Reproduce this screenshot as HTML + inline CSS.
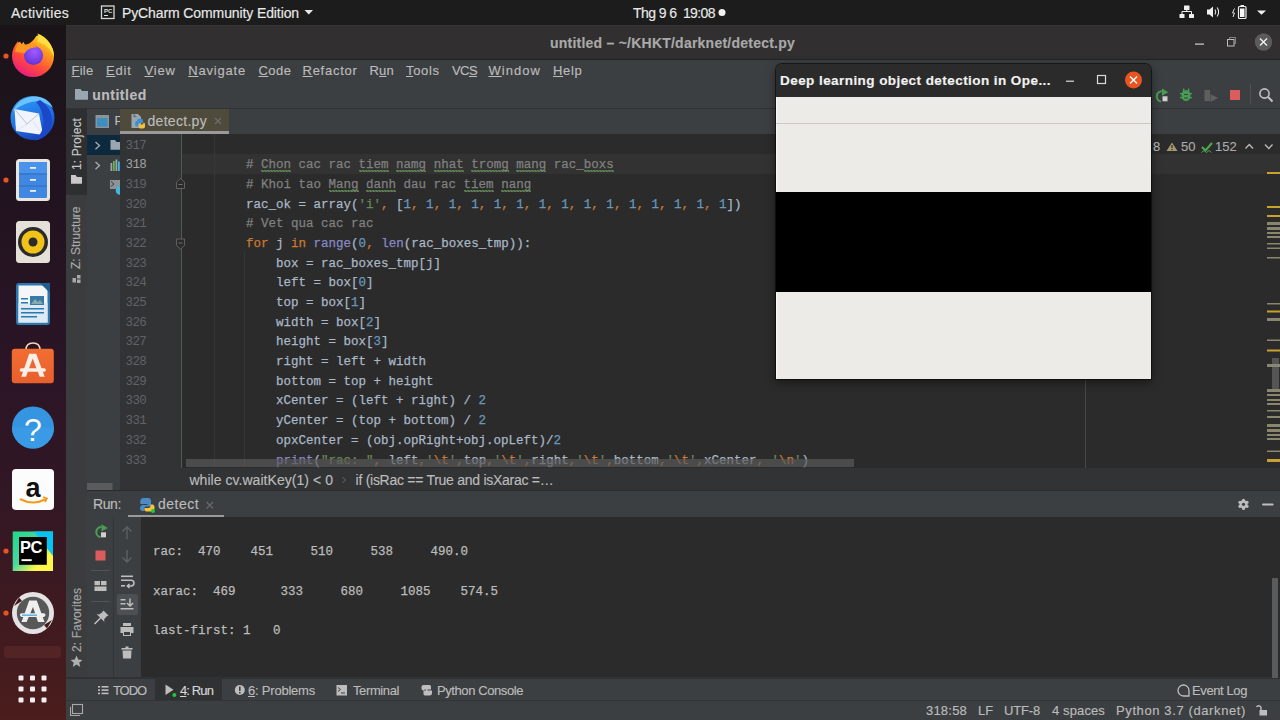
<!DOCTYPE html>
<html><head><meta charset="utf-8">
<style>
*{margin:0;padding:0;box-sizing:border-box}
html,body{width:1280px;height:720px;overflow:hidden;background:#2b2b2b;font-family:"Liberation Sans",sans-serif}
.a{position:absolute}
.t{position:absolute;white-space:pre;-webkit-text-stroke:0.15px}
.t u{text-decoration:underline;text-underline-offset:1px;text-decoration-thickness:1px}
svg{position:absolute;overflow:visible}
#topbar{left:0;top:0;width:1280px;height:25px;background:#1c1c1c}
#dock{left:0;top:25px;width:66px;height:695px;background:linear-gradient(#1a1418 0%,#221320 25%,#2b1526 50%,#321724 68%,#3f1a20 85%,#4b1d1c 100%)}
#titlebar{left:66px;top:25px;width:1214px;height:35px;background:#312f2f;border-top:1px solid #363434;border-bottom:1px solid #222222}
#menubar{left:66px;top:60px;width:1214px;height:49px;background:#3c3f41;border-bottom:1px solid #303234}
#strip{left:66px;top:109px;width:21px;height:570px;background:#3a3c3e}
#stripsel{left:66px;top:109px;width:21px;height:86px;background:#2d2f31}
#projpanel{left:87px;top:109px;width:33px;height:382px;background:#3c3f41}
#projsel{left:87px;top:135px;width:33px;height:20px;background:#0d293e}
#tabbar{left:120px;top:109px;width:1160px;height:25px;background:#3c3f41}
#tab{left:120px;top:109px;width:109px;height:25px;background:#4e4b3d}
#tabline{left:120px;top:131px;width:109px;height:3px;background:#9a9a9a}
#gutter{left:120px;top:134px;width:61px;height:334px;background:#313335}
#editor{left:181px;top:134px;width:1099px;height:334px;background:#2b2b2b}
#curline{left:181px;top:154px;width:1099px;height:20px;background:#323232}
#curgut{left:120px;top:154px;width:61px;height:20px;background:#313335}
#foldline{left:181px;top:134px;width:1px;height:334px;background:#555555}
#crumbs{left:120px;top:468px;width:1160px;height:22px;background:#313335}
#runhdr{left:87px;top:490px;width:1193px;height:27px;background:#3c3f41;border-top:1px solid #2b2b2b}
#runtabline{left:128px;top:515px;width:96px;height:2px;background:#9a9a9a}
#runbody{left:87px;top:517px;width:1193px;height:161px;background:#2b2b2b}
#runtb1{left:87px;top:517px;width:26px;height:161px;background:#3c3f41}
#runtb2{left:113px;top:517px;width:28px;height:161px;background:#3c3f41;border-left:1px solid #323436}
#bottombar{left:66px;top:677px;width:1214px;height:23px;background:#3c3f41;border-top:2px solid #2f3133}
#statusbar{left:66px;top:700px;width:1214px;height:20px;background:#3c3f41;border-top:1px solid #323436}
.code{position:absolute;left:186px;-webkit-text-stroke:0.25px;font-family:"Liberation Mono",monospace;font-size:12.5px;line-height:19.69px;height:19.69px;white-space:pre;color:#a9b7c6}
.ln{position:absolute;left:125.5px;letter-spacing:-0.6px;font-family:"Liberation Mono",monospace;font-size:12.5px;line-height:19.69px;white-space:pre;color:#606366}
.c{color:#808080}.k{color:#cc7832}.n{color:#6897bb}.s{color:#6a8759}.b{color:#8888c6}
.ty{background-image:linear-gradient(45deg,transparent 30%,#5b8250 30%,#5b8250 62%,transparent 62%),linear-gradient(135deg,transparent 30%,#5b8250 30%,#5b8250 62%,transparent 62%);background-size:3px 2px,3px 2px;background-position:0 100%,1.5px 100%;background-repeat:repeat-x}
.con{position:absolute;left:153px;-webkit-text-stroke:0.25px;font-family:"Liberation Mono",monospace;font-size:12.5px;line-height:19.69px;white-space:pre;color:#bbbbbb}
#dialog{left:776px;top:97px;width:375px;height:282px;background:#edebe7;border-left:1px solid #f8f8f6}
#dshadow{left:776px;top:64px;width:375px;height:315px;box-shadow:0 0 0 1px rgba(10,10,10,0.7),0 3px 10px rgba(0,0,0,0.5);border-radius:6px 6px 0 0}
#dtitle{left:776px;top:64px;width:375px;height:33px;background:#2c2b2b;border-radius:6px 6px 0 0}
#dline{left:776px;top:123px;width:375px;height:1px;background:#cdc9c4}
#dblack{left:776px;top:192px;width:375px;height:100px;background:#000}
</style></head><body>
<div id="topbar" class="a"></div>
<div id="dock" class="a"></div>
<div id="titlebar" class="a"></div>
<div id="menubar" class="a"></div>
<div id="strip" class="a"></div>
<div id="stripsel" class="a"></div>
<div id="projpanel" class="a"></div>
<div id="projsel" class="a"></div>
<div id="tabbar" class="a"></div>
<div class="t" style="left:114.4px;top:112px;font-size:13px;line-height:18px;color:#bbbbbb">P</div>
<div id="tab" class="a"></div>
<div id="tabline" class="a"></div>
<div id="gutter" class="a"></div>
<div id="editor" class="a"></div>
<div id="curline" class="a"></div>
<div id="foldline" class="a"></div>
<div id="crumbs" class="a"></div>
<div id="runhdr" class="a"></div>
<div id="runtabline" class="a"></div>
<div id="runbody" class="a"></div>
<div id="runtb1" class="a"></div>
<div id="runtb2" class="a"></div>
<div id="bottombar" class="a"></div>
<div id="statusbar" class="a"></div>
<div class="a" style="left:155px;top:679px;width:67px;height:21px;background:#2f3133"></div>
<div class='ln' style='top:136.50px;color:#606366'>317</div>
<div class='code' style='top:156.19px'>        <span class='c'># </span><span class='c ty'>Chon</span> <span class='c'>cac rac </span><span class='c ty'>tiem</span> <span class='c'></span><span class='c ty'>namg</span> <span class='c'></span><span class='c ty'>nhat</span> <span class='c'></span><span class='c ty'>tromg</span> <span class='c'></span><span class='c ty'>mang</span> <span class='c'>rac_</span><span class='c ty'>boxs</span></div>
<div class='ln' style='top:156.19px;color:#a4a3a3'>318</div>
<div class='code' style='top:175.88px'>        <span class='c'># Khoi tao </span><span class='c ty'>Mang</span> <span class='c'></span><span class='c ty'>danh</span> <span class='c'>dau rac </span><span class='c ty'>tiem</span> <span class='c'></span><span class='c ty'>nang</span></div>
<div class='ln' style='top:175.88px;color:#606366'>319</div>
<div class='code' style='top:195.57px'>        rac_ok = array(<span class='s'>'i'</span><span class='k'>, </span>[<span class='n'>1</span><span class='k'>, </span><span class='n'>1</span><span class='k'>, </span><span class='n'>1</span><span class='k'>, </span><span class='n'>1</span><span class='k'>, </span><span class='n'>1</span><span class='k'>, </span><span class='n'>1</span><span class='k'>, </span><span class='n'>1</span><span class='k'>, </span><span class='n'>1</span><span class='k'>, </span><span class='n'>1</span><span class='k'>, </span><span class='n'>1</span><span class='k'>, </span><span class='n'>1</span><span class='k'>, </span><span class='n'>1</span><span class='k'>, </span><span class='n'>1</span><span class='k'>, </span><span class='n'>1</span><span class='k'>, </span><span class='n'>1</span>])</div>
<div class='ln' style='top:195.57px;color:#606366'>320</div>
<div class='code' style='top:215.26px'>        <span class='c'># Vet qua cac rac</span></div>
<div class='ln' style='top:215.26px;color:#606366'>321</div>
<div class='code' style='top:234.95px'>        <span class='k'>for</span> j <span class='k'>in</span> <span class='b'>range</span>(<span class='n'>0</span><span class='k'>, </span><span class='b'>len</span>(rac_boxes_tmp)):</div>
<div class='ln' style='top:234.95px;color:#606366'>322</div>
<div class='code' style='top:254.64px'>            box = rac_boxes_tmp[j]</div>
<div class='ln' style='top:254.64px;color:#606366'>323</div>
<div class='code' style='top:274.33px'>            left = box[<span class='n'>0</span>]</div>
<div class='ln' style='top:274.33px;color:#606366'>324</div>
<div class='code' style='top:294.02px'>            top = box[<span class='n'>1</span>]</div>
<div class='ln' style='top:294.02px;color:#606366'>325</div>
<div class='code' style='top:313.71px'>            width = box[<span class='n'>2</span>]</div>
<div class='ln' style='top:313.71px;color:#606366'>326</div>
<div class='code' style='top:333.40px'>            height = box[<span class='n'>3</span>]</div>
<div class='ln' style='top:333.40px;color:#606366'>327</div>
<div class='code' style='top:353.09px'>            right = left + width</div>
<div class='ln' style='top:353.09px;color:#606366'>328</div>
<div class='code' style='top:372.78px'>            bottom = top + height</div>
<div class='ln' style='top:372.78px;color:#606366'>329</div>
<div class='code' style='top:392.47px'>            xCenter = (left + right) / <span class='n'>2</span></div>
<div class='ln' style='top:392.47px;color:#606366'>330</div>
<div class='code' style='top:412.16px'>            yCenter = (top + bottom) / <span class='n'>2</span></div>
<div class='ln' style='top:412.16px;color:#606366'>331</div>
<div class='code' style='top:431.85px'>            opxCenter = (obj.opRight+obj.opLeft)/<span class='n'>2</span></div>
<div class='ln' style='top:431.85px;color:#606366'>332</div>
<div class='code' style='top:451.54px'>            <span class='b'>print</span>(<span class='s'>"rac: "</span><span class='k'>, </span>left<span class='k'>,</span><span class='s'>'</span><span class='k'>\t</span><span class='s'>'</span><span class='k'>,</span>top<span class='k'>,</span><span class='s'>'</span><span class='k'>\t</span><span class='s'>'</span><span class='k'>,</span>right<span class='k'>,</span><span class='s'>'</span><span class='k'>\t</span><span class='s'>'</span><span class='k'>,</span>bottom<span class='k'>,</span><span class='s'>'</span><span class='k'>\t</span><span class='s'>'</span><span class='k'>,</span>xCenter<span class='k'>, </span><span class='s'>'</span><span class='k'>\n</span><span class='s'>'</span>)</div>
<div class='ln' style='top:451.54px;color:#606366'>333</div>
<div class='con' style='top:543px'>rac:  470    451     510     538     490.0</div>
<div class='con' style='top:582.5px'>xarac:  469      333     680     1085    574.5</div>
<div class='con' style='top:622px'>last-first: 1   0</div>


<svg style="left:0;top:24px" width="66" height="696" viewBox="0 24 66 696">
 <defs>
  <radialGradient id="ffg" cx="0.45" cy="0.7" r="0.65">
   <stop offset="0" stop-color="#ff9a1f"/><stop offset="0.55" stop-color="#ff5a2a"/><stop offset="0.85" stop-color="#ff3366"/><stop offset="1" stop-color="#e31587"/>
  </radialGradient>
  <radialGradient id="ffp" cx="0.5" cy="0.6" r="0.6">
   <stop offset="0" stop-color="#6b5cff"/><stop offset="1" stop-color="#9a3cf0"/>
  </radialGradient>
  <linearGradient id="tbg" x1="0" y1="0" x2="1" y2="1"><stop offset="0" stop-color="#2a8cf0"/><stop offset="1" stop-color="#1b4fc0"/></linearGradient>
  <linearGradient id="pcg" x1="0" y1="1" x2="1" y2="0"><stop offset="0" stop-color="#21d789"/><stop offset="0.5" stop-color="#fcf84a"/><stop offset="1" stop-color="#07c3f2"/></linearGradient>
 </defs>
 <!-- firefox -->
 <circle cx="6" cy="56" r="2.6" fill="#e95420"/>
 <linearGradient id="ffr" x1="0.85" y1="0.05" x2="0.25" y2="1"><stop offset="0" stop-color="#ffe23a"/><stop offset="0.3" stop-color="#ff9a1a"/><stop offset="0.65" stop-color="#ff4a3c"/><stop offset="1" stop-color="#e8168a"/></linearGradient>
 <radialGradient id="ffp2" cx="0.55" cy="0.3" r="0.8"><stop offset="0" stop-color="#a05cff"/><stop offset="1" stop-color="#5b2bd0"/></radialGradient>
 <circle cx="33" cy="56" r="21" fill="url(#ffr)"/>
 <path d="M18 33 L38 33 C35 39 31 43 27 44.5 C24 44.5 21 44 18 42 Z" fill="#1b1519"/>
 <path d="M37.5 33.5 C47 37 54 46 54 57 C51 49 45 43 37 42 C39 39 38.5 36 37.5 33.5Z" fill="#ffe040"/>
 <circle cx="33.5" cy="55.5" r="9.6" fill="url(#ffp2)"/>
 <path d="M15 52 C16 47 18 43 20 41.5 L21.5 44.5 L23.5 41.8 L25 45 C29 44 34 45 37 47.5 C32 47 27 49 24.5 53.5 C22 52.5 18 52 15 52Z" fill="#ff9820"/>
 <!-- thunderbird -->
 <linearGradient id="tbg2" x1="0.3" y1="0" x2="0.7" y2="1"><stop offset="0" stop-color="#2e9bf5"/><stop offset="0.6" stop-color="#1d6ae0"/><stop offset="1" stop-color="#1a3fb0"/></linearGradient>
 <circle cx="32.5" cy="118" r="22" fill="url(#tbg2)"/>
 <path d="M13 112 C16 101 26 96 36 96.5 C44 97 50 101 53 108 C46 102 36 100 28 103 C22 105 16 108 13 112Z" fill="#6cc2ff"/>
 <path d="M14.5 109 L39 113.5 L43 135 L16 131 Z" fill="#f2f4fb"/>
 <path d="M14.5 109 L27 124 L39 113.5" fill="none" stroke="#b6bdd6" stroke-width="0.9"/>
 <path d="M16 131 L27 124 M43 135 L33 121" fill="none" stroke="#d0d5e6" stroke-width="0.6"/>
 <path d="M40 100 C50 106 55 118 50 130 C46 137 40 140 34 140.5 C42 134 45 126 43 118 C42 111 40 106 36 102Z" fill="#1a48c8"/>
 <!-- files -->
 <circle cx="6" cy="180" r="2.6" fill="#e95420"/>
 <rect x="16" y="159" width="34" height="42" rx="3.5" fill="#e9e6e2"/>
 <rect x="19" y="162" width="28" height="36" rx="1.5" fill="#3f87e0"/>
 <rect x="19" y="162" width="28" height="11" fill="#4a92ea"/>
 <line x1="19" y1="174" x2="47" y2="174" stroke="#2c68b8" stroke-width="0.8"/>
 <line x1="19" y1="186" x2="47" y2="186" stroke="#2c68b8" stroke-width="0.8"/>
 <rect x="30" y="167" width="6" height="1.8" fill="#f0f0f0"/>
 <rect x="30" y="179" width="6" height="1.8" fill="#f0f0f0"/>
 <rect x="30" y="190" width="6" height="1.8" fill="#f0f0f0"/>
 <!-- rhythmbox -->
 <rect x="16" y="221" width="34" height="42" rx="3.5" fill="#e6e1d8"/>
 <circle cx="33" cy="242" r="15" fill="#2b2b2b"/>
 <circle cx="33" cy="242" r="11.5" fill="#f1c318"/>
 <circle cx="33" cy="242" r="4.5" fill="#2b2b2b"/>
 <!-- writer -->
 <path d="M16 286 Q16 283 19 283 L44 283 L50 289 L50 322 Q50 325 47 325 L19 325 Q16 325 16 322Z" fill="#2a78b0"/>
 <path d="M18.5 285.5 L43 285.5 L47.5 290 L47.5 322.5 L18.5 322.5Z" fill="#f4f6f8"/>
 <path d="M18.5 303 L47.5 303 L47.5 322.5 L18.5 322.5Z" fill="#ddeaf2"/>
 <path d="M40 283 L50 283 L50 293 Z" fill="#1e5f8f"/>
 <rect x="21" y="298" width="7" height="1.5" fill="#2a78b0"/><rect x="21" y="302" width="7" height="1.5" fill="#2a78b0"/>
 <rect x="30" y="296" width="14" height="9" fill="#3a7aa8"/><path d="M31 304 L35 299 L38 302 L40 300 L43 304Z" fill="#8aa"/>
 <rect x="21" y="308" width="23" height="1.5" fill="#2a78b0"/><rect x="21" y="312" width="23" height="1.5" fill="#2a78b0"/><rect x="21" y="316" width="16" height="1.5" fill="#2a78b0"/>
 <!-- software -->
 <path d="M26 350 Q26 343 33 343 Q40 343 40 350" fill="none" stroke="#f6d2bd" stroke-width="1.6"/>
 <linearGradient id="swg" x1="0" y1="0" x2="0" y2="1"><stop offset="0" stop-color="#f26d32"/><stop offset="1" stop-color="#e8602c"/></linearGradient>
 <rect x="11.8" y="348.8" width="42" height="34.5" rx="3" fill="url(#swg)"/>
 <path d="M29.2 353.8 L36.2 353.8 L44.7 376.7 L39.7 376.7 L32.7 358.5 L26 376.7 L21.3 376.7 Z" fill="#fbefe8"/>
 <rect x="19.7" y="368.2" width="26.2" height="3.6" rx="1.8" fill="#fbefe8"/>
 <!-- help -->
 <circle cx="33" cy="427.5" r="21" fill="#3595e0"/>
 <path d="M12 427.5 A21 21 0 0 0 54 427.5Z" fill="#3a9ae6"/>
 <text x="33" y="441" text-anchor="middle" font-family="Liberation Sans" font-size="32" fill="#ffffff">?</text>
 <!-- amazon -->
 <rect x="12" y="469" width="42" height="41" rx="4" fill="#fcfcfc"/>
 <text x="33" y="497" text-anchor="middle" font-family="Liberation Sans" font-weight="bold" font-size="27" fill="#111111">a</text>
 <path d="M20 499 Q33 506 46 499" fill="none" stroke="#f39b1b" stroke-width="2"/>
 <path d="M43 497 L47 498.5 L45 502" fill="none" stroke="#f39b1b" stroke-width="1.6"/>
 <!-- pycharm -->
 <circle cx="6" cy="551" r="2.6" fill="#e95420"/>
 <linearGradient id="pcg2" x1="0" y1="0" x2="1" y2="1"><stop offset="0" stop-color="#21d789"/><stop offset="0.45" stop-color="#4cd6a0"/><stop offset="0.75" stop-color="#fcf84a"/><stop offset="1" stop-color="#fcf84a"/></linearGradient>
 <rect x="12.7" y="531.5" width="40.3" height="39.5" fill="url(#pcg2)"/>
 <path d="M34 531.5 L53 531.5 L53 556 Z" fill="#07c3f2"/>
 <rect x="19" y="537" width="27.8" height="27.8" fill="#000"/>
 <text x="20" y="553.2" font-family="Liberation Sans" font-weight="bold" font-size="16.5" fill="#fff" letter-spacing="-0.6">PC</text>
 <rect x="21.5" y="559.2" width="10.2" height="1.9" fill="#fff"/>
 <!-- updater -->
 <circle cx="6" cy="613" r="2.6" fill="#e95420"/>
 <circle cx="33" cy="613" r="21" fill="#e4e2e2"/>
 <circle cx="33" cy="613" r="16.2" fill="#585858"/>
 <path d="M14 606 L19 597.5 L22 601 Z" fill="#451a1d"/>
 <path d="M52 620 L47 628.5 L44 625 Z" fill="#451a1d"/>
 <path d="M29.2 600.5 L36.8 600.5 L44.5 622 L38 622 L33 607 L26.6 622 L21.5 622 Z" fill="#efefef"/>
 <rect x="19.9" y="613.3" width="25.6" height="3.6" rx="1.8" fill="#efefef"/>
 <rect x="22" y="614.5" width="15" height="1.3" fill="#4aa8e0"/>
 <!-- separator -->
 <rect x="4" y="646" width="57" height="12" rx="3" fill="#5a2828" opacity="0.7"/>
 <!-- grid -->
 <g fill="#f4f0f0">
  <rect x="18.5" y="675.5" width="5" height="5" rx="1"/><rect x="30" y="675.5" width="5" height="5" rx="1"/><rect x="41.5" y="675.5" width="5" height="5" rx="1"/>
  <rect x="18.5" y="686.5" width="5" height="5" rx="1"/><rect x="30" y="686.5" width="5" height="5" rx="1"/><rect x="41.5" y="686.5" width="5" height="5" rx="1"/>
  <rect x="18.5" y="697.5" width="5" height="5" rx="1"/><rect x="30" y="697.5" width="5" height="5" rx="1"/><rect x="41.5" y="697.5" width="5" height="5" rx="1"/>
 </g>
</svg>

<svg style="left:0;top:0" width="1280" height="60" viewBox="0 0 1280 60">
 <!-- pycharm small icon -->
 <rect x="101.5" y="6" width="12.5" height="12.5" fill="#1a1a1a" stroke="#d8d8d8" stroke-width="1.3"/>
 <text x="104" y="13" font-family="Liberation Sans" font-weight="bold" font-size="6" fill="#e0e0e0">PC</text>
 <rect x="104" y="15" width="4" height="1" fill="#e0e0e0"/>
 <!-- caret -->
 <path d="M304.5 10 L313 10 L308.75 14.5Z" fill="#e8e8e8"/>
 <!-- clock dot -->
 <circle cx="722" cy="12.5" r="3.5" fill="#f0f0f0"/>
 <!-- network -->
 <g fill="#f0f0f0"><rect x="1184" y="5.5" width="5.5" height="4.5" rx="0.5"/><rect x="1179.5" y="14" width="5" height="4" rx="0.5"/><rect x="1189" y="14" width="5" height="4" rx="0.5"/></g>
 <path d="M1186.75 10 V12 M1182 14 V11.5 H1191.5 V14" fill="none" stroke="#f0f0f0" stroke-width="1"/>
 <!-- volume -->
 <path d="M1207 9.5 H1209.5 L1213 6.5 V17.5 L1209.5 14.5 H1207Z" fill="#f0f0f0"/>
 <path d="M1215 9.5 Q1216.5 12 1215 14.5 M1217.2 7.5 Q1220 12 1217.2 16.5" fill="none" stroke="#e8e8e8" stroke-width="1.1"/>
 <!-- battery -->
 <path d="M1234.5 8.5 L1232.5 13 L1234.5 13 L1233 17" fill="none" stroke="#e0e0e0" stroke-width="1"/>
 <rect x="1238.5" y="6.5" width="7.5" height="12" rx="1" fill="none" stroke="#f0f0f0" stroke-width="1.2"/>
 <rect x="1240.5" y="5" width="3.5" height="1.5" fill="#f0f0f0"/>
 <rect x="1240" y="8.5" width="4.5" height="8.5" fill="#f8f8f8"/>
 <!-- dropdown -->
 <path d="M1257 10.5 L1266 10.5 L1261.5 14.8Z" fill="#f0f0f0"/>
 <!-- window controls -->
 <rect x="1195" y="43.5" width="9" height="1.2" fill="#cfcfcf"/>
 <rect x="1227.5" y="39.5" width="6.5" height="6.5" fill="none" stroke="#bdbdbd" stroke-width="1"/>
 <path d="M1229.5 39.5 V37.5 H1235.5 V43.5 H1234" fill="none" stroke="#9a9a9a" stroke-width="0.8"/>
 <circle cx="1263.5" cy="42" r="8.7" fill="#5c5b5b"/>
 <path d="M1260 38.5 L1267 45.5 M1267 38.5 L1260 45.5" stroke="#f4f4f4" stroke-width="1.3"/>
</svg>

<svg style="left:0;top:0" width="1280" height="720" viewBox="0 0 1280 720">
 <!-- nav folder -->
 <path d="M75 89 H80.5 L82 91 H88 V99.7 H75Z" fill="#9aa7b0"/>
 <!-- project strip: folder icon -->
 <path d="M71 175 H75.5 L77 177 H82 V183.8 H71Z" fill="#c8c8c8"/>
 <!-- structure icon -->
 <g fill="#a8a8a8"><rect x="72.5" y="278" width="3.5" height="4.5"/><rect x="77" y="275" width="3.5" height="3.5"/><rect x="77" y="279.5" width="3.5" height="3.5"/></g>
 <!-- favorites star -->
 <path d="M76.5 655.5 L78.2 659.6 L82.5 659.9 L79.2 662.7 L80.3 667 L76.5 664.6 L72.7 667 L73.8 662.7 L70.5 659.9 L74.8 659.6Z" fill="#b0b0b0"/>
 <!-- project panel icon -->
 <rect x="95.5" y="115" width="13.5" height="13" fill="#8c9399"/>
 <rect x="97" y="118" width="10.5" height="8.7" fill="#3e8ebf"/>
 <!-- chevrons -->
 <path d="M95.5 142 L99.5 145.6 L95.5 149.2" fill="none" stroke="#a8adb2" stroke-width="1.3"/>
 <path d="M95.5 162 L99.5 165.6 L95.5 169.2" fill="none" stroke="#a8adb2" stroke-width="1.3"/>
 <!-- folder row1 -->
 <path d="M110.5 140 H115 L116.5 142 H120 V149.8 H110.5Z" fill="#9aa7b0"/>
 <!-- bars icon row2 -->
 <rect x="110.5" y="163" width="1.8" height="8" fill="#9aa7b0"/><rect x="113" y="161" width="1.8" height="10" fill="#62b543"/><rect x="115.5" y="159.5" width="1.8" height="11.5" fill="#9aa7b0"/><rect x="118" y="161.5" width="1.8" height="9.5" fill="#40b6e0"/>
 <!-- row3 icon -->
 <rect x="110" y="180" width="10" height="9" fill="#8c9399"/>
 <path d="M111 181.5 L114 184 L111 186.5" fill="none" stroke="#3c3f41" stroke-width="1"/>
 <path d="M120 186.2 A4.3 4.3 0 0 0 120 194.8Z" fill="#40b6e0"/>
 <!-- project h-scroll thumb -->
 <rect x="87" y="483" width="25.5" height="7" fill="#595b5d"/>
 <!-- tab python file icon -->
 <path d="M131.5 114 H138 L141 117 V128 H131.5Z" fill="#9aa7b0"/>
 <path d="M133.5 113.5 L137 117.3 L133.5 117.3Z" fill="#3c3f41" opacity="0.5"/>
 <path d="M137 120.5 Q137 118.8 139 118.8 L141.5 118.8 Q143 118.8 143 120.3 L143 123 L139.5 123 Q138 123 138 124.5 L138 126.5 L136.8 126.5 Q135.2 126.5 135.2 124.5 L135.2 122.5 Q135.2 121 137 121Z" fill="#3d8fd1"/>
 <path d="M143.5 122.5 Q145 122.5 145 124.5 L145 126.5 Q145 128.5 143 128.5 L140.5 128.5 Q139 128.5 139 127 L139 124.5 L142 124.5 Q143.5 124.5 143.5 122.5Z" fill="#f5c33b"/>
 <!-- tab close -->
 <path d="M215 118 L221 124 M221 118 L215 124" stroke="#6e6e6e" stroke-width="1.1"/>
 <!-- fold markers -->
 <path d="M176.5 188.5 V182 L180.5 178.5 L184.5 182 V188.5Z" fill="#2b2b2b" stroke="#606060" stroke-width="1"/>
 <rect x="178.5" y="184" width="4" height="1" fill="#707070"/>
 <path d="M176.5 239 V245.5 L180.5 249 L184.5 245.5 V239Z" fill="#2b2b2b" stroke="#606060" stroke-width="1"/>
 <rect x="178.5" y="242.5" width="4" height="1" fill="#707070"/>
 <!-- indent guides -->
 <rect x="214" y="134" width="1" height="334" fill="#363636"/>
 <rect x="244" y="252" width="1" height="216" fill="#363636"/>
 <!-- right margin -->
 <rect x="1085" y="134" width="1" height="334" fill="#474747"/>
 <!-- inspection widget -->
 <path d="M1172 142.5 L1177.5 151 H1166.5Z" fill="#a39a6e"/>
 <rect x="1171.4" y="145" width="1.2" height="3" fill="#2b2b2b"/><rect x="1171.4" y="149" width="1.2" height="1.1" fill="#2b2b2b"/>
 <path d="M1202 147 L1205.5 150.5 L1212 143" fill="none" stroke="#4da652" stroke-width="2.2"/>
 <path d="M1201.5 152.5 L1204 150.5 L1206.5 152.5 L1209 150.5 L1211.5 152.5" fill="none" stroke="#4da652" stroke-width="1"/>
 <path d="M1245.5 148.5 L1249.3 144.5 L1253 148.5" fill="none" stroke="#bababa" stroke-width="1.3"/>
 <path d="M1265 144.5 L1268.8 148.5 L1272.5 144.5" fill="none" stroke="#bababa" stroke-width="1.3"/>
 <!-- error stripes -->
 <g fill="#c9a22e">
  <rect x="1267" y="172" width="13" height="2"/><rect x="1267" y="206" width="13" height="2"/><rect x="1267" y="215" width="13" height="2"/>
  <rect x="1267" y="310.5" width="13" height="2"/><rect x="1267" y="349.5" width="13" height="2"/><rect x="1267" y="459" width="13" height="3"/>
 </g>
 <g fill="#8a866e">
  <rect x="1267" y="222" width="13" height="3"/><rect x="1267" y="227" width="13" height="3"/><rect x="1267" y="232" width="13" height="2"/><rect x="1267" y="236" width="13" height="2"/>
  <rect x="1267" y="243" width="13" height="1.5"/><rect x="1267" y="247.5" width="13" height="1.5"/><rect x="1267" y="257" width="13" height="1.5"/>
  <rect x="1267" y="303" width="13" height="1.5"/><rect x="1267" y="318" width="13" height="3"/><rect x="1267" y="339.5" width="13" height="1.5"/>
  <rect x="1267" y="364" width="13" height="3"/><rect x="1267" y="389" width="13" height="3"/><rect x="1267" y="394" width="13" height="2"/><rect x="1267" y="399" width="13" height="2"/><rect x="1267" y="403" width="13" height="2"/>
  <rect x="1267" y="410" width="13" height="1.5"/><rect x="1267" y="416" width="13" height="2"/><rect x="1267" y="424" width="13" height="3"/><rect x="1267" y="429" width="13" height="3"/><rect x="1267" y="434" width="13" height="2"/><rect x="1267" y="438" width="13" height="2"/><rect x="1267" y="450.5" width="13" height="1.5"/>
 </g>
 <rect x="1272" y="358" width="7" height="31" fill="#8a8a8a" opacity="0.45"/>
 <!-- editor h scrollbar -->
 <rect x="186" y="459" width="668" height="8" fill="#5a5a5a" opacity="0.7"/>
 <path d="M342.5 477 L345.5 480 L342.5 483" fill="none" stroke="#6a6a6a" stroke-width="1"/>
 <!-- nav toolbar icons -->
 <path d="M1161 101.5 A5.2 5.2 0 0 1 1162 91.2" fill="none" stroke="#499c54" stroke-width="2.1"/>
 <path d="M1162 88.6 L1168.3 92.2 L1162 95.8Z" fill="#499c54"/>
 <rect x="1162.5" y="96.3" width="5" height="5" fill="#d0d0d0"/>
 <g fill="#499c54"><ellipse cx="1186" cy="95.5" rx="4.5" ry="5.5"/><rect x="1180" y="93" width="12" height="1.3"/><rect x="1180" y="97" width="12" height="1.3"/><rect x="1183" y="88.5" width="1.3" height="3"/><rect x="1188" y="88.5" width="1.3" height="3"/></g>
 <rect x="1184" y="94" width="4" height="1" fill="#3c3f41"/><rect x="1184" y="97.5" width="4" height="1" fill="#3c3f41"/>
 <path d="M1204.5 90 H1210 V101 H1204.5Z M1210.5 94 L1218 98 L1210.5 102Z" fill="#5e6060"/>
 <rect x="1230" y="90" width="10" height="10" fill="#db5c5c"/>
 <rect x="1250" y="84" width="1" height="20" fill="#515151"/>
 <circle cx="1264.5" cy="93.5" r="4.6" fill="none" stroke="#c0c0c0" stroke-width="1.6"/>
 <path d="M1268 97 L1272.5 101.5" stroke="#c0c0c0" stroke-width="2"/>
 <!-- run header -->
 <path d="M143.5 498 Q140.3 498 140.3 501.5 L140.3 504 L147.5 504 L147.5 505 L143 505 Q140 505 140 508.5 Q140 511 143 511 L144.5 511 L144.5 508 Q144.5 506.5 146 506.5 L149.5 506.5 Q151 506.5 151 505 L151 501 Q151 498 148 498Z" fill="#4c8cc6"/>
 <path d="M150.5 504.5 L152.5 504.5 Q154.5 504.5 154.5 508 Q154.5 511.5 151.5 511.5 L146.5 511.5 Q144.5 511.5 144.5 509.5 L144.5 508 L148.5 508 Q150.5 508 150.5 506Z" fill="#f2c53d"/>
 <circle cx="153" cy="511" r="2" fill="#1ccc34"/>
 <path d="M206.5 502 L213 508.5 M213 502 L206.5 508.5" stroke="#6a6a6a" stroke-width="1.1"/>
 <!-- gear -->
 <g transform="translate(1243.5,504.3)" fill="#bdbdbd">
  <circle r="4"/><circle cx="0.00" cy="4.10" r="1.55"/><circle cx="-3.55" cy="2.05" r="1.55"/><circle cx="-3.55" cy="-2.05" r="1.55"/><circle cx="-0.00" cy="-4.10" r="1.55"/><circle cx="3.55" cy="-2.05" r="1.55"/><circle cx="3.55" cy="2.05" r="1.55"/>
  <circle r="1.6" fill="#3c3f41"/>
 </g>
 <rect x="1262" y="503.4" width="11.6" height="2" rx="1" fill="#bdbdbd"/>
 <!-- run toolbar col1 -->
 <path d="M100.5 537.2 A5.2 5.2 0 0 1 101.5 526.9" fill="none" stroke="#499c54" stroke-width="2.1"/>
 <path d="M101.5 524.3 L107.8 527.9 L101.5 531.5Z" fill="#499c54"/>
 <rect x="101" y="532.3" width="5" height="5" fill="#d0d0d0"/>
 <rect x="95.5" y="550.5" width="10" height="10" fill="#db5c5c"/>
 <rect x="91" y="570" width="19" height="1" fill="#515355"/>
 <g fill="#bdbdbd"><rect x="94.5" y="581" width="5.5" height="4.2"/><rect x="101" y="581" width="5.5" height="4.2"/><rect x="94.5" y="586.5" width="12" height="4.5"/></g>
 <rect x="91" y="601" width="19" height="1" fill="#515355"/>
 <path d="M103.5 610.5 L108.5 615.5 L106.5 616.5 L104 619.5 L104.5 622 L96.5 614 L99 614.5 L102 612.5 Z" fill="#bdbdbd"/><path d="M100.5 618 L94.5 624" stroke="#bdbdbd" stroke-width="1.6"/>
 <rect x="113" y="517" width="1" height="161" fill="#323436"/>
 <!-- col2 -->
 <path d="M127 527 V539 M122.5 531.5 L127 527 L131.5 531.5" fill="none" stroke="#5f6264" stroke-width="1.3"/>
 <path d="M127 550 V562 M122.5 557.5 L127 562 L131.5 557.5" fill="none" stroke="#5f6264" stroke-width="1.3"/>
 <g fill="#bdbdbd"><rect x="121" y="575.5" width="12" height="1.6"/><rect x="121" y="585" width="4" height="1.6"/></g>
 <path d="M121 580.3 H131 Q134 580.3 134 583.1 Q134 586 131 586 H127.5 M129.5 584 L127.3 586 L129.5 588" fill="none" stroke="#bdbdbd" stroke-width="1.5"/>
 <rect x="117" y="594" width="21" height="21" rx="2" fill="#4c5052"/>
 <g fill="#bdbdbd"><rect x="120.5" y="599" width="5" height="1.5"/><rect x="120.5" y="603" width="5" height="1.5"/><rect x="120.5" y="608" width="13" height="1.5"/></g>
 <path d="M130 598.5 V606 M127 603 L130 606 L133 603" fill="none" stroke="#bdbdbd" stroke-width="1.5"/>
 <g fill="#bdbdbd"><rect x="123" y="623" width="8" height="3"/><rect x="120.5" y="627" width="13" height="6"/><rect x="123" y="631" width="8" height="5"/></g>
 <rect x="124" y="632" width="6" height="3" fill="#3c3f41"/>
 <g fill="#bdbdbd"><rect x="121.5" y="648" width="11" height="1.6"/><rect x="125.5" y="646.5" width="3" height="1.5"/><path d="M122.5 650.5 H131.5 L131 658.5 H123Z"/></g>
 <!-- console scrollbar -->
 <rect x="1272" y="578" width="6" height="100" rx="1" fill="#595b5d"/>
 <!-- bottom bar selected -->
 <!-- todo icon -->
 <g fill="#bdbdbd"><rect x="98" y="686" width="2" height="1.6"/><rect x="98" y="689.3" width="2" height="1.6"/><rect x="98" y="692.6" width="2" height="1.6"/>
  <rect x="101.5" y="686" width="7" height="1.6"/><rect x="101.5" y="689.3" width="7" height="1.6"/><rect x="101.5" y="692.6" width="7" height="1.6"/></g>
 <path d="M165.5 684.5 L173.5 689.8 L165.5 695Z" fill="#bdbdbd"/>
 <circle cx="174.3" cy="695" r="2" fill="#1ccc34"/>
 <circle cx="239.8" cy="690" r="5" fill="#bdbdbd"/>
 <rect x="239" y="686.5" width="1.6" height="4.5" fill="#3c3f41"/><rect x="239" y="692" width="1.6" height="1.5" fill="#3c3f41"/>
 <rect x="336.5" y="685" width="10.5" height="10.5" fill="#bdbdbd"/>
 <path d="M338 687.5 L340.5 689.5 L338 691.5" fill="none" stroke="#3c3f41" stroke-width="1"/>
 <rect x="341" y="692.5" width="4" height="1" fill="#3c3f41"/>
 <path d="M425 685 H429.5 Q431 685 431 686.5 V689.5 H426 V690.5 H423.5 Q421.5 690.5 421.5 688.5 V687 Q421.5 685 423.5 685Z M425.5 695.5 H429.5 Q432 695.5 432 693.5 V690.5 H427.5 V689.5 H425 Q423.5 689.5 423.5 691 V694 Q423.5 695.5 425.5 695.5Z" fill="#bdbdbd"/>
 <!-- event log -->
 <path d="M1189 696 V690.5 A5.5 5.5 0 1 0 1183.5 696Z" fill="none" stroke="#bdbdbd" stroke-width="1.3"/>
 <!-- status icons -->
 <rect x="72.5" y="704.5" width="10" height="9" fill="none" stroke="#a8a8a8" stroke-width="1.1"/>
 <path d="M70.5 707 V715.5 H80" fill="none" stroke="#a8a8a8" stroke-width="1.1"/>
 <rect x="1259.5" y="710" width="7.5" height="5.5" fill="#bdbdbd"/>
 <path d="M1261 710 V707.5 A2.5 2.5 0 0 0 1256.5 707" fill="none" stroke="#bdbdbd" stroke-width="1.4"/>
</svg>

<div id="dshadow" class="a"></div>
<div id="dialog" class="a"></div>
<div id="dtitle" class="a"></div>
<div id="dline" class="a"></div>
<div id="dblack" class="a"></div>

<svg style="left:776px;top:64px" width="375" height="33" viewBox="776 64 375 33">
 <rect x="1066" y="80.6" width="8" height="1.2" fill="#dadada"/>
 <rect x="1097.5" y="75.5" width="8" height="8" fill="none" stroke="#dadada" stroke-width="1.2"/>
 <circle cx="1133.5" cy="80" r="8.5" fill="#e95420"/>
 <path d="M1130 76.5 L1137 83.5 M1137 76.5 L1130 83.5" stroke="#ffffff" stroke-width="1.4"/>
</svg>

<div class='t' style='left:11.0px;top:3.15px;font-family:"Liberation Sans",sans-serif;font-size:14px;font-weight:normal;line-height:20px;color:#e8e8e8;letter-spacing:0.277px;'>Activities</div>
<div class='t' style='left:122.0px;top:3.15px;font-family:"Liberation Sans",sans-serif;font-size:14px;font-weight:normal;line-height:20px;color:#e8e8e8;letter-spacing:-0.109px;'>PyCharm Community Edition</div>
<div class='t' style='left:633.0px;top:3.15px;font-family:"Liberation Sans",sans-serif;font-size:14px;font-weight:normal;line-height:20px;color:#e8e8e8;letter-spacing:-0.593px;'>Thg 9 6  19:08</div>
<div class='t' style='left:550.0px;top:33.15px;font-family:"Liberation Sans",sans-serif;font-size:14px;font-weight:bold;line-height:20px;color:#a9a9a9;letter-spacing:0.232px;'>untitled – ~/KHKT/darknet/detect.py</div>
<div class='t' style='left:71.6px;top:61.00px;font-family:"Liberation Sans",sans-serif;font-size:13px;font-weight:normal;line-height:19px;color:#bbbbbb;letter-spacing:0.208px;'><u>F</u>ile</div>
<div class='t' style='left:106.0px;top:61.00px;font-family:"Liberation Sans",sans-serif;font-size:13px;font-weight:normal;line-height:19px;color:#bbbbbb;letter-spacing:0.798px;'><u>E</u>dit</div>
<div class='t' style='left:144.5px;top:61.00px;font-family:"Liberation Sans",sans-serif;font-size:13px;font-weight:normal;line-height:19px;color:#bbbbbb;letter-spacing:0.787px;'><u>V</u>iew</div>
<div class='t' style='left:188.2px;top:61.00px;font-family:"Liberation Sans",sans-serif;font-size:13px;font-weight:normal;line-height:19px;color:#bbbbbb;letter-spacing:0.811px;'><u>N</u>avigate</div>
<div class='t' style='left:258.5px;top:61.00px;font-family:"Liberation Sans",sans-serif;font-size:13px;font-weight:normal;line-height:19px;color:#bbbbbb;letter-spacing:0.427px;'><u>C</u>ode</div>
<div class='t' style='left:302.5px;top:61.00px;font-family:"Liberation Sans",sans-serif;font-size:13px;font-weight:normal;line-height:19px;color:#bbbbbb;letter-spacing:0.745px;'><u>R</u>efactor</div>
<div class='t' style='left:369.6px;top:61.00px;font-family:"Liberation Sans",sans-serif;font-size:13px;font-weight:normal;line-height:19px;color:#bbbbbb;letter-spacing:0.114px;'>R<u>u</u>n</div>
<div class='t' style='left:406.0px;top:61.00px;font-family:"Liberation Sans",sans-serif;font-size:13px;font-weight:normal;line-height:19px;color:#bbbbbb;letter-spacing:0.668px;'><u>T</u>ools</div>
<div class='t' style='left:452.0px;top:61.00px;font-family:"Liberation Sans",sans-serif;font-size:13px;font-weight:normal;line-height:19px;color:#bbbbbb;letter-spacing:-0.578px;'>VC<u>S</u></div>
<div class='t' style='left:488.5px;top:61.00px;font-family:"Liberation Sans",sans-serif;font-size:13px;font-weight:normal;line-height:19px;color:#bbbbbb;letter-spacing:1.042px;'><u>W</u>indow</div>
<div class='t' style='left:553.0px;top:61.00px;font-family:"Liberation Sans",sans-serif;font-size:13px;font-weight:normal;line-height:19px;color:#bbbbbb;letter-spacing:0.688px;'><u>H</u>elp</div>
<div class='t' style='left:92.2px;top:85.15px;font-family:"Liberation Sans",sans-serif;font-size:14px;font-weight:bold;line-height:20px;color:#bbbbbb;letter-spacing:0.507px;'>untitled</div>
<div class='t' style='left:147.5px;top:111.15px;font-family:"Liberation Sans",sans-serif;font-size:14px;font-weight:normal;line-height:20px;color:#bbbbbb;letter-spacing:0.297px;'>detect.py</div>
<div class='t' style='left:189.4px;top:470.15px;font-family:"Liberation Sans",sans-serif;font-size:14px;font-weight:normal;line-height:20px;color:#bbbbbb;letter-spacing:0.047px;'>while cv.waitKey(1) &lt; 0</div>
<div class='t' style='left:355.6px;top:470.15px;font-family:"Liberation Sans",sans-serif;font-size:14px;font-weight:normal;line-height:20px;color:#bbbbbb;letter-spacing:-0.275px;'>if (isRac == True and isXarac =…</div>
<div class='t' style='left:93.0px;top:494.15px;font-family:"Liberation Sans",sans-serif;font-size:14px;font-weight:normal;line-height:20px;color:#bbbbbb;letter-spacing:-0.395px;'>Run:</div>
<div class='t' style='left:158.0px;top:494.15px;font-family:"Liberation Sans",sans-serif;font-size:14px;font-weight:normal;line-height:20px;color:#bbbbbb;letter-spacing:0.477px;'>detect</div>
<div class='t' style='left:113.0px;top:681.00px;font-family:"Liberation Sans",sans-serif;font-size:13px;font-weight:normal;line-height:19px;color:#bbbbbb;letter-spacing:-1.082px;'>TODO</div>
<div class='t' style='left:180.0px;top:681.00px;font-family:"Liberation Sans",sans-serif;font-size:13px;font-weight:normal;line-height:19px;color:#d6d6d6;letter-spacing:-0.885px;'><u>4</u>: Run</div>
<div class='t' style='left:248.0px;top:681.00px;font-family:"Liberation Sans",sans-serif;font-size:13px;font-weight:normal;line-height:19px;color:#bbbbbb;letter-spacing:-0.216px;'><u>6</u>: Problems</div>
<div class='t' style='left:353.0px;top:681.00px;font-family:"Liberation Sans",sans-serif;font-size:13px;font-weight:normal;line-height:19px;color:#bbbbbb;letter-spacing:-0.391px;'>Terminal</div>
<div class='t' style='left:437.0px;top:681.00px;font-family:"Liberation Sans",sans-serif;font-size:13px;font-weight:normal;line-height:19px;color:#bbbbbb;letter-spacing:-0.413px;'>Python Console</div>
<div class='t' style='left:1192.0px;top:681.00px;font-family:"Liberation Sans",sans-serif;font-size:13px;font-weight:normal;line-height:19px;color:#bbbbbb;letter-spacing:-0.394px;'>Event Log</div>
<div class='t' style='left:926.0px;top:701.00px;font-family:"Liberation Sans",sans-serif;font-size:13px;font-weight:normal;line-height:19px;color:#bbbbbb;letter-spacing:0.206px;'>318:58</div>
<div class='t' style='left:978.0px;top:701.00px;font-family:"Liberation Sans",sans-serif;font-size:13px;font-weight:normal;line-height:19px;color:#bbbbbb;letter-spacing:-0.086px;'>LF</div>
<div class='t' style='left:1004.0px;top:701.00px;font-family:"Liberation Sans",sans-serif;font-size:13px;font-weight:normal;line-height:19px;color:#bbbbbb;letter-spacing:-0.169px;'>UTF-8</div>
<div class='t' style='left:1052.0px;top:701.00px;font-family:"Liberation Sans",sans-serif;font-size:13px;font-weight:normal;line-height:19px;color:#bbbbbb;letter-spacing:0.119px;'>4 spaces</div>
<div class='t' style='left:1116.0px;top:701.00px;font-family:"Liberation Sans",sans-serif;font-size:13px;font-weight:normal;line-height:19px;color:#bbbbbb;letter-spacing:0.610px;'>Python 3.7 (darknet)</div>
<div class='t' style='left:780.0px;top:71.07px;font-family:"Liberation Sans",sans-serif;font-size:13.5px;font-weight:bold;line-height:19.5px;color:#f2f2f2;letter-spacing:0.436px;'>Deep learning object detection in Ope...</div>
<div class='t' style='left:67.84px;top:169.90px;transform-origin:0 0;transform:rotate(-90deg);font-family:"Liberation Sans",sans-serif;font-size:12px;line-height:18px;color:#c8c8c8;letter-spacing:0.140px'>1: Project</div>
<div class='t' style='left:67.44px;top:268.90px;transform-origin:0 0;transform:rotate(-90deg);font-family:"Liberation Sans",sans-serif;font-size:12px;line-height:18px;color:#a8a8a8;letter-spacing:-0.016px'>Z: Structure</div>
<div class='t' style='left:67.84px;top:652.00px;transform-origin:0 0;transform:rotate(-90deg);font-family:"Liberation Sans",sans-serif;font-size:12px;line-height:18px;color:#a8a8a8;letter-spacing:0.108px'>2: Favorites</div>
<div class='t' style='left:1153.0px;top:137.00px;font-family:"Liberation Sans",sans-serif;font-size:13px;font-weight:normal;line-height:19px;color:#aaaaaa;letter-spacing:0.000px;'>8</div>
<div class='t' style='left:1181.0px;top:137.00px;font-family:"Liberation Sans",sans-serif;font-size:13px;font-weight:normal;line-height:19px;color:#aaaaaa;letter-spacing:0.000px;'>50</div>
<div class='t' style='left:1215.0px;top:137.00px;font-family:"Liberation Sans",sans-serif;font-size:13px;font-weight:normal;line-height:19px;color:#aaaaaa;letter-spacing:0.000px;'>152</div>
</body></html>
